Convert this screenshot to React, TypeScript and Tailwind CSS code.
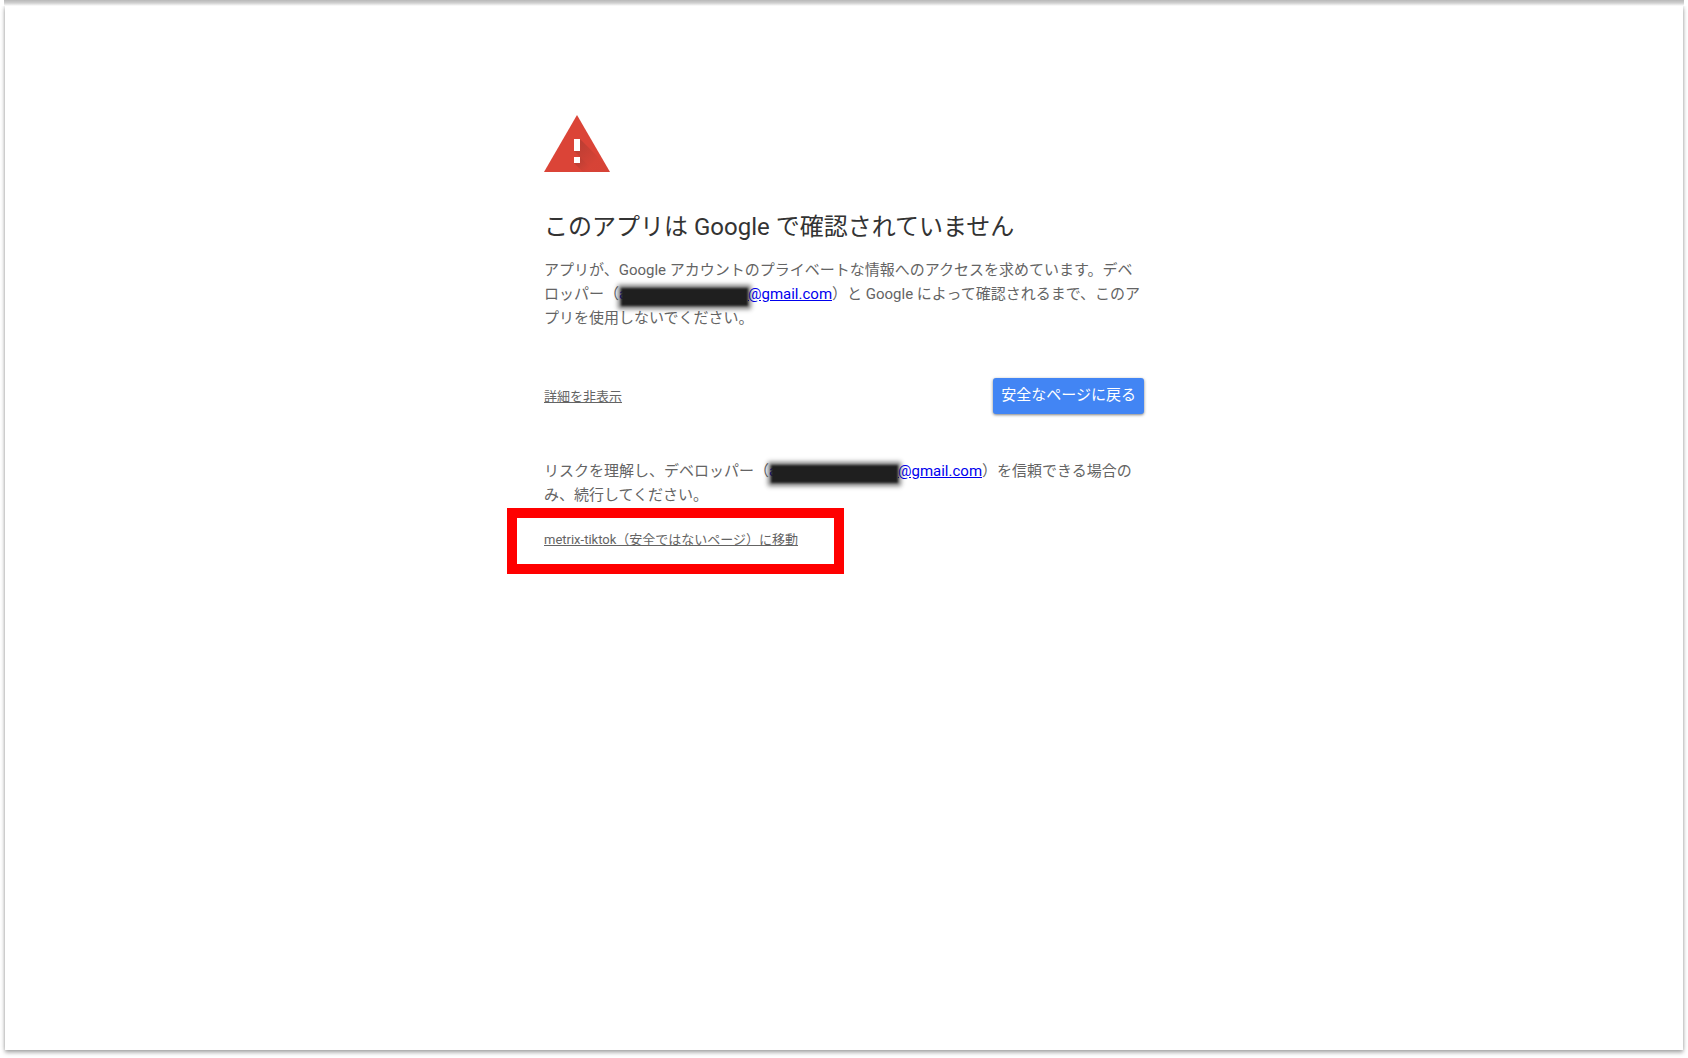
import React from "react";

function WarningIcon() {
  return (
    <svg width="66" height="57" viewBox="0 0 66 57" aria-hidden="true" className="block">
      <defs>
        <linearGradient id="fall" x1="34" y1="28" x2="52" y2="46" gradientUnits="userSpaceOnUse">
          <stop offset="0" stopColor="#3e2723" stopOpacity="0.2" />
          <stop offset="1" stopColor="#3e2723" stopOpacity="0.03" />
        </linearGradient>
        <linearGradient id="fallDot" x1="33" y1="45" x2="43" y2="55" gradientUnits="userSpaceOnUse">
          <stop offset="0" stopColor="#3e2723" stopOpacity="0.2" />
          <stop offset="1" stopColor="#3e2723" stopOpacity="0.03" />
        </linearGradient>
        <clipPath id="tri">
          <path d="M33 0 66 57H0Z" />
        </clipPath>
      </defs>
      <path d="M33 0 66 57H0Z" fill="#db4437" />
      <g clipPath="url(#tri)">
        <path d="M36 24 69 57H51L36 42 30 36Z" fill="url(#fall)" />
        <path d="M36 42 51 57H39L30 48Z" fill="url(#fallDot)" />
      </g>
      <path d="M30 24h6v12h-6zM30 42h6v6h-6z" fill="#fff" />
    </svg>
  );
}

function MaskedEmail() {
  return (
    <a href="#developer" className="text-[#0000ee] underline" aria-label="developer@gmail.com">
      <span className="relative inline-block w-[129px] leading-4">
        a
        <span className="absolute left-0.5 right-0 top-0.5 h-[18px] bg-[#1f1f1f] shadow-[0_0_4px_3px_rgba(31,31,31,0.6)] blur-[1px]" />
      </span>
      @gmail.com
    </a>
  );
}

export default function App() {
  return (
    <div className="min-h-screen bg-white px-[5px] pb-2 font-[Roboto,'Noto_Sans_CJK_JP',sans-serif]" lang="ja">
      <div className="-mx-px h-1.5 bg-linear-to-b from-[#b8b8b8] via-[#d0d0d0] to-white" />
      <main className="min-h-[calc(100vh-14px)] bg-white pt-[109px] shadow-[0_0_4px_rgba(0,0,0,0.25),0_3px_4px_rgba(0,0,0,0.25)] [clip-path:inset(0_-5px_-8px_-5px)]">
        <div className="mx-auto w-full max-w-[600px] text-[15px] leading-6 text-[#646464]">
          <WarningIcon />
          <h1 className="mt-[37px] text-2xl leading-9 text-[#333333]">このアプリは Google で確認されていません</h1>
          <p className="mt-[13px]">
            アプリが、Google アカウントのプライベートな情報へのアクセスを求めています。デベロッパー（
            <MaskedEmail />
            ）と Google によって確認されるまで、このアプリを使用しないでください。
          </p>
          <div className="mt-12 flex items-center justify-between">
            <button type="button" className="pt-0.5 text-[13px] underline">
              詳細を非表示
            </button>
            <button
              type="button"
              className="h-9 rounded-[3px] bg-[#4285f4] px-2 pb-0.5 text-white shadow-[0_1px_3px_rgba(0,0,0,0.5)]"
            >
              安全なページに戻る
            </button>
          </div>
          <p className="mt-[45px]">
            リスクを理解し、デベロッパー（
            <MaskedEmail />
            ）を信頼できる場合のみ、続行してください。
          </p>
          <div className="mt-px -ml-[37px] flex h-[66px] w-[337px] items-center border-10 border-[#ff0000] pb-0.5 pl-[27px]">
            <a href="#continue" className="text-[13px] underline">
              metrix-tiktok（安全ではないページ）に移動
            </a>
          </div>
        </div>
      </main>
    </div>
  );
}
